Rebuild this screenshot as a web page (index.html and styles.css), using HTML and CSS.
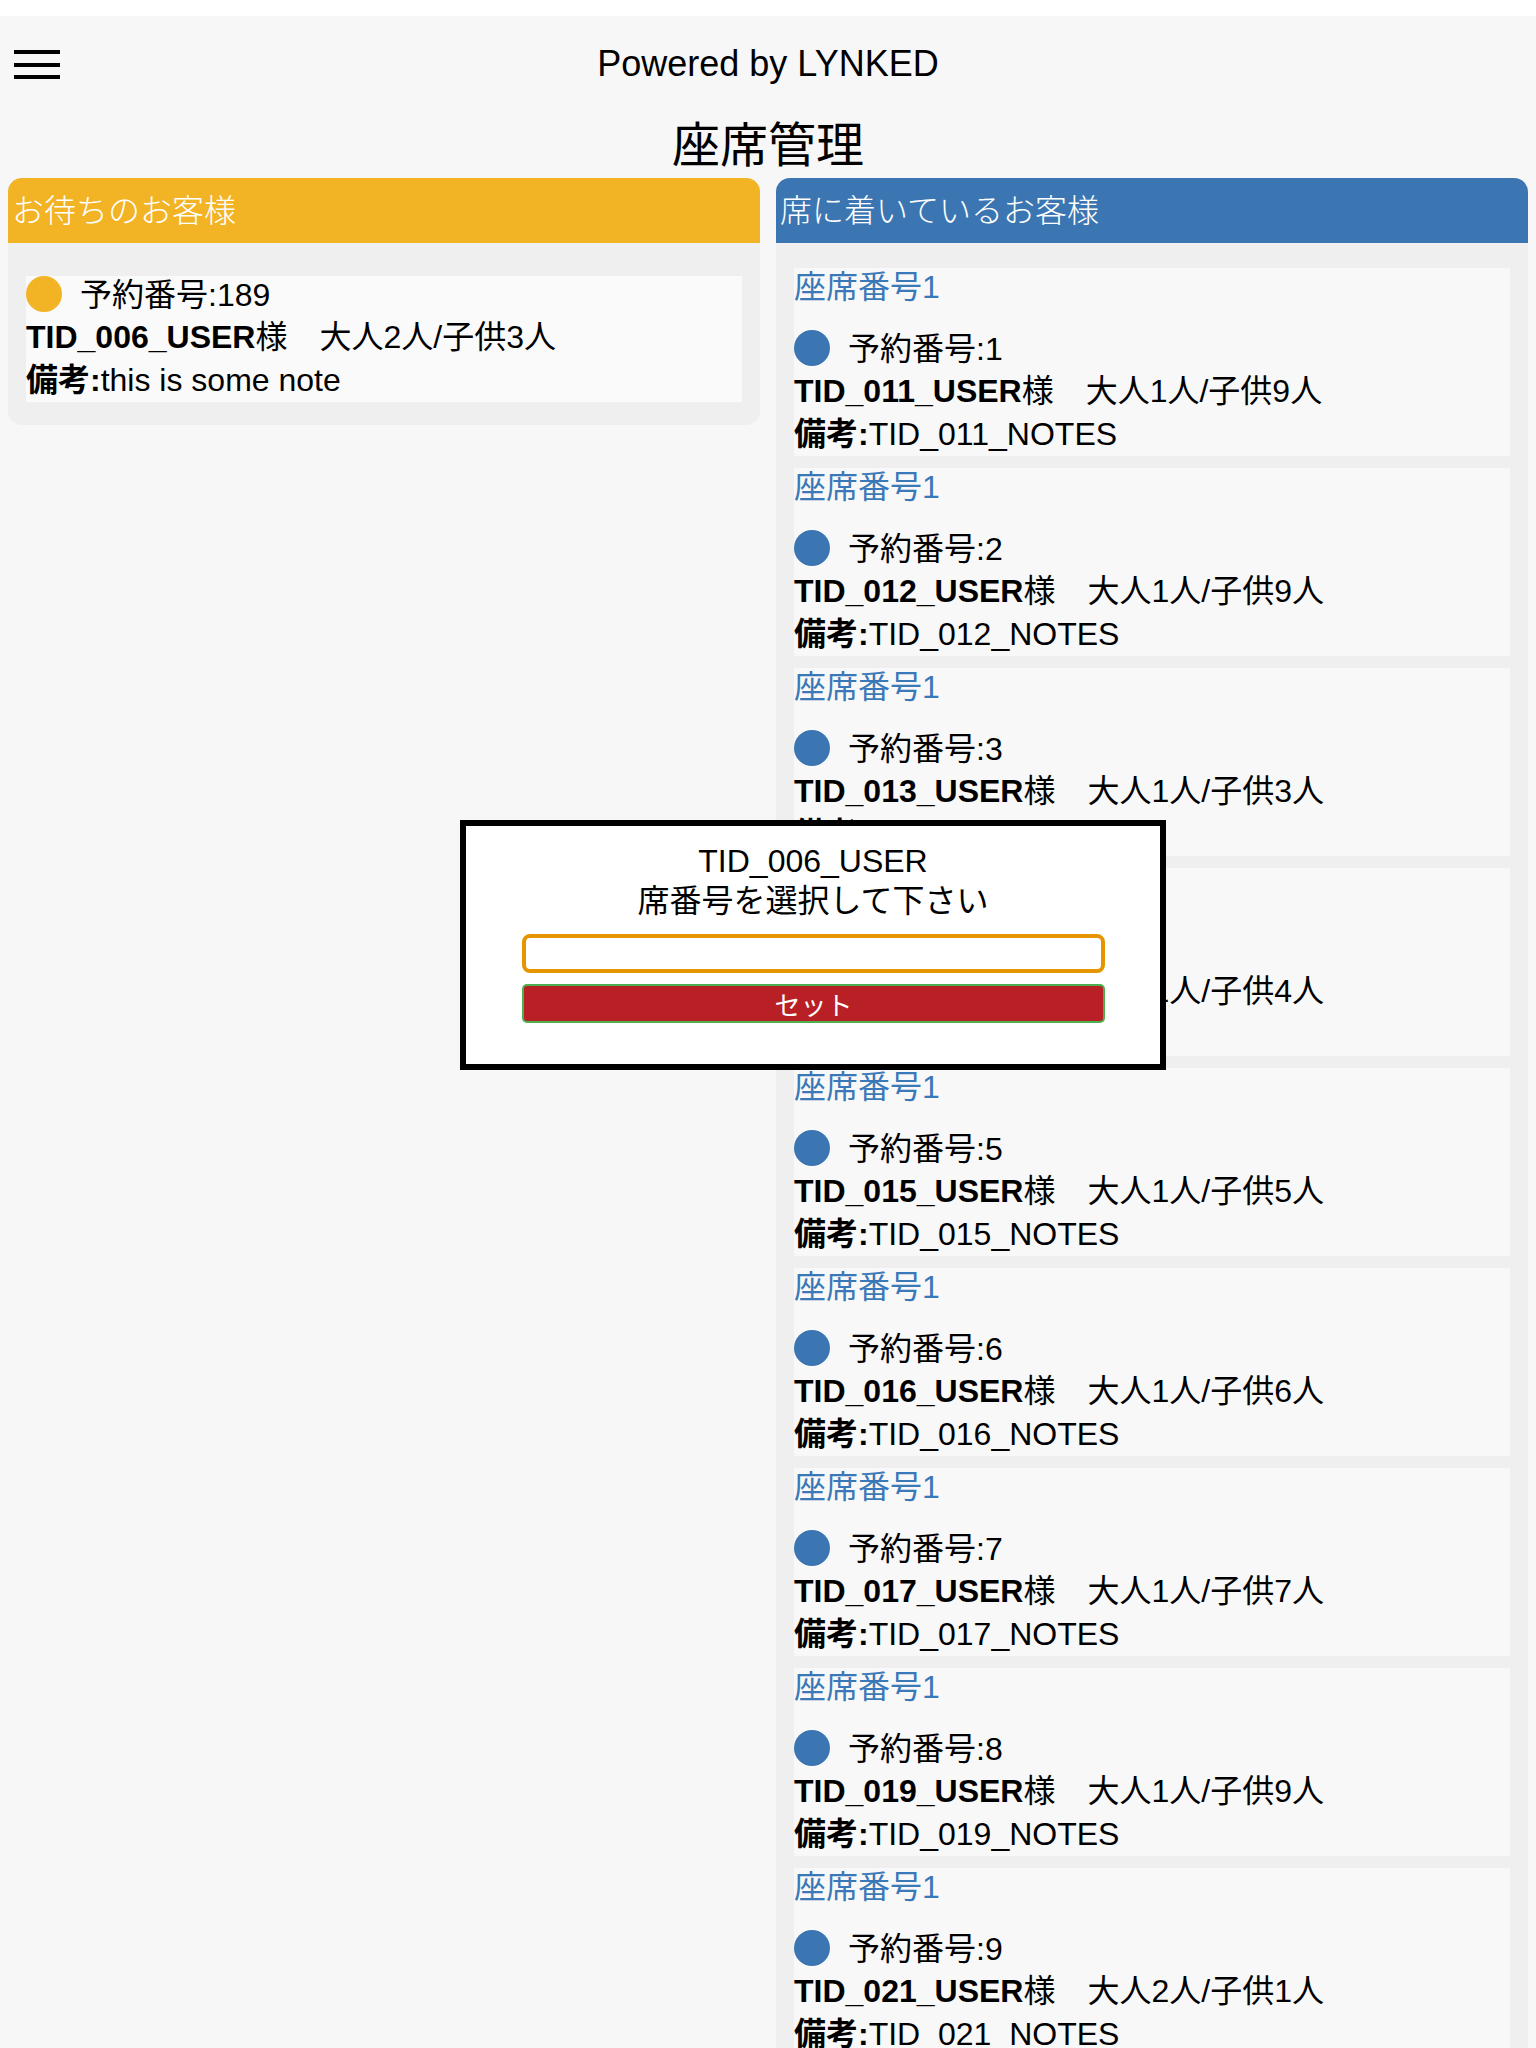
FILE: index.html
```html
<!DOCTYPE html>
<html lang="ja">
<head>
<meta charset="utf-8">
<title>座席管理</title>
<link rel="stylesheet" href="styles.css">
</head>
<body>
<div class="page">
  <header class="topbar">
    <button class="menu" aria-label="menu">
      <svg width="46" height="30" viewBox="0 0 46 30"><rect x="0" y="0" width="46" height="4" fill="#000"/><rect x="0" y="13" width="46" height="4" fill="#000"/><rect x="0" y="25" width="46" height="4" fill="#000"/></svg>
    </button>
    <div class="powered">Powered by LYNKED</div>
    <div></div>
  </header>
  <h1 class="title">座席管理</h1>
  <div class="columns">
    <section class="panel">
      <div class="panel-head wait">お待ちのお客様</div>
      <div class="panel-body wait-body">
        <div class="card">
          <div class="line first"><span class="dot yellow"></span><span>予約番号:189</span></div>
          <div class="line"><b>TID_006_USER</b>様　大人2人/子供3人</div>
          <div class="line"><b>備考:</b>this is some note</div>
        </div>
      </div>
    </section>
    <section class="panel">
      <div class="panel-head seated">席に着いているお客様</div>
      <div class="panel-body seated-body">
        <div class="card">
          <div class="seat">座席番号1</div>
          <div class="line first"><span class="dot blue"></span><span>予約番号:1</span></div>
          <div class="line"><b>TID_011_USER</b>様　大人1人/子供9人</div>
          <div class="line"><b>備考:</b>TID_011_NOTES</div>
        </div>
        <div class="card">
          <div class="seat">座席番号1</div>
          <div class="line first"><span class="dot blue"></span><span>予約番号:2</span></div>
          <div class="line"><b>TID_012_USER</b>様　大人1人/子供9人</div>
          <div class="line"><b>備考:</b>TID_012_NOTES</div>
        </div>
        <div class="card">
          <div class="seat">座席番号1</div>
          <div class="line first"><span class="dot blue"></span><span>予約番号:3</span></div>
          <div class="line"><b>TID_013_USER</b>様　大人1人/子供3人</div>
          <div class="line"><b>備考:</b>TID_013_NOTES</div>
        </div>
        <div class="card">
          <div class="seat">座席番号1</div>
          <div class="line first"><span class="dot blue"></span><span>予約番号:4</span></div>
          <div class="line"><b>TID_014_USER</b>様　大人1人/子供4人</div>
          <div class="line"><b>備考:</b>TID_014_NOTES</div>
        </div>
        <div class="card">
          <div class="seat">座席番号1</div>
          <div class="line first"><span class="dot blue"></span><span>予約番号:5</span></div>
          <div class="line"><b>TID_015_USER</b>様　大人1人/子供5人</div>
          <div class="line"><b>備考:</b>TID_015_NOTES</div>
        </div>
        <div class="card">
          <div class="seat">座席番号1</div>
          <div class="line first"><span class="dot blue"></span><span>予約番号:6</span></div>
          <div class="line"><b>TID_016_USER</b>様　大人1人/子供6人</div>
          <div class="line"><b>備考:</b>TID_016_NOTES</div>
        </div>
        <div class="card">
          <div class="seat">座席番号1</div>
          <div class="line first"><span class="dot blue"></span><span>予約番号:7</span></div>
          <div class="line"><b>TID_017_USER</b>様　大人1人/子供7人</div>
          <div class="line"><b>備考:</b>TID_017_NOTES</div>
        </div>
        <div class="card">
          <div class="seat">座席番号1</div>
          <div class="line first"><span class="dot blue"></span><span>予約番号:8</span></div>
          <div class="line"><b>TID_019_USER</b>様　大人1人/子供9人</div>
          <div class="line"><b>備考:</b>TID_019_NOTES</div>
        </div>
        <div class="card">
          <div class="seat">座席番号1</div>
          <div class="line first"><span class="dot blue"></span><span>予約番号:9</span></div>
          <div class="line"><b>TID_021_USER</b>様　大人2人/子供1人</div>
          <div class="line"><b>備考:</b>TID_021_NOTES</div>
        </div>
      </div>
    </section>
  </div>
  <div class="modal">
    <div class="modal-text">TID_006_USER</div>
    <div class="modal-text">席番号を選択して下さい</div>
    <input class="seat-input" type="text">
    <button class="set-btn">セット</button>
  </div>
</div>
</body>
</html>
```
FILE: styles.css
```css
html, body {
  margin: 0;
  padding: 0;
  background: #ffffff;
  overflow: hidden;
}
body {
  font-family: "Liberation Sans", "Noto Sans CJK JP", sans-serif;
  color: #000;
}
.page {
  position: relative;
  margin-top: 16px;
  background: #f7f7f7;
  min-height: 2032px;
}
.topbar {
  height: 95px;
  display: grid;
  grid-template-columns: 1fr auto 1fr;
  align-items: center;
}
.menu {
  justify-self: start;
  margin-left: 14px;
  padding: 0;
  border: 0;
  background: none;
  display: flex;
  width: 46px;
  height: 30px;
  margin-top: 2px;
}
.powered {
  font-size: 36px;
  line-height: 40px;
}
.title {
  margin: 0;
  text-align: center;
  font-weight: normal;
  font-size: 48px;
  line-height: 69px;
  height: 67px;
}
.columns {
  display: grid;
  grid-template-columns: 1fr 1fr;
  column-gap: 16px;
  padding: 0 8px;
  align-items: start;
}
.panel {
  border-radius: 14px;
  overflow: hidden;
  background: #efefef;
}
.panel-head {
  height: 65px;
  line-height: 60px;
  padding-left: 4px;
  font-size: 32px;
  color: #ffffff;
  font-family: "Noto Sans CJK JP", sans-serif;
  font-weight: 300;
}
.panel-head.wait { background: #f2b324; }
.panel-head.seated { background: #3b76b2; }
.panel-body {
  padding: 0 18px;
  display: flex;
  flex-direction: column;
  gap: 12px;
}
.wait-body { padding-top: 33px; padding-bottom: 23px; }
.seated-body { padding-top: 25px; padding-bottom: 24px; }
.card {
  background: #f8f8f8;
  font-size: 32px;
}
.wait-body .card { background: #fafafa; }
.seat {
  color: #3b78b8;
  line-height: 38px;
  height: 38px;
  margin-bottom: 24px;
}
.line {
  height: 43px;
  line-height: 43px;
  white-space: nowrap;
}
.line.first {
  height: 40px;
  line-height: 40px;
  display: flex;
  align-items: flex-start;
  gap: 18px;
}
.line.first span:last-child { line-height: 38px; }
.line b { font-weight: bold; }
.dot {
  display: inline-block;
  width: 36px;
  height: 36px;
  border-radius: 50%;
  flex: none;
}
.dot.yellow { background: #f2b324; }
.dot.blue { background: #3b76b2; }
.modal {
  position: absolute;
  left: 460px;
  top: 804px;
  width: 694px;
  height: 238px;
  border: 6px solid #000;
  background: #ffffff;
  box-sizing: content-box;
  padding: 0;
  display: flex;
  flex-direction: column;
  align-items: stretch;
}
.modal-text {
  text-align: center;
  font-size: 32px;
  line-height: 40px;
}
.modal-text:first-child { margin-top: 15px; }
.seat-input {
  margin: 13px 55px 0 56px;
  height: 39px;
  box-sizing: border-box;
  border: 4px solid #e59500;
  border-radius: 8px;
  background: #fff;
  padding: 0 8px;
  font-size: 28px;
  outline: none;
}
.set-btn {
  margin: 11px 55px 0 56px;
  height: 39px;
  box-sizing: border-box;
  border: 2px solid #4caf50;
  border-radius: 5px;
  background: #b92025;
  color: #ffffff;
  font-family: "Noto Sans CJK JP", sans-serif;
  font-size: 26px;
  line-height: 33px;
  padding: 0;
}
```
